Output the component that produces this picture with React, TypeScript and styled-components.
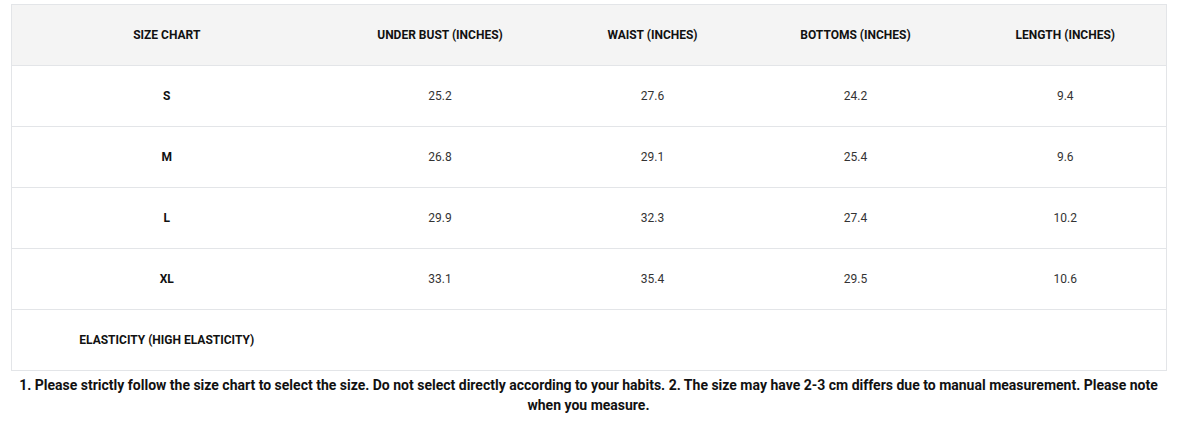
import React from "react";
import styled, { createGlobalStyle } from "styled-components";

const Global = createGlobalStyle`
  html, body { margin: 0; padding: 0; background: #fff; }
  body { font-family: Roboto, "Liberation Sans", Arial, sans-serif; }
`;

const Page = styled.div`
  padding: 4px 16px 0 11px;
`;

const Table = styled.table`
  width: 1155px;
  border-collapse: collapse;
  table-layout: fixed;
  border: 1px solid #e3e5e8;
`;

const HeadRow = styled.tr`
  background: #f4f4f4;
`;

const Th = styled.th`
  height: 60px;
  padding: 0;
  border-top: 1px solid #e3e5e8;
  border-bottom: 1px solid #e3e5e8;
  font-size: 12px;
  font-weight: 700;
  color: #111;
  text-align: center;
  vertical-align: middle;
`;

const Td = styled.td<{ $bold?: boolean }>`
  height: 60px;
  padding: 0;
  border-top: 1px solid #e3e5e8;
  border-bottom: 1px solid #e3e5e8;
  font-size: 12px;
  font-weight: ${(p) => (p.$bold ? 700 : 400)};
  color: ${(p) => (p.$bold ? "#111" : "#333")};
  text-align: center;
  vertical-align: middle;
`;

const Note = styled.p`
  margin: 4px 0 0;
  width: 1155px;
  font-size: 14px;
  font-weight: 700;
  line-height: 20px;
  color: #111;
  text-align: center;
`;

const widths = [310, 237, 188, 218, 202];
const headers = ["SIZE CHART", "UNDER BUST (INCHES)", "WAIST (INCHES)", "BOTTOMS (INCHES)", "LENGTH (INCHES)"];
const rows = [
  ["S", "25.2", "27.6", "24.2", "9.4"],
  ["M", "26.8", "29.1", "25.4", "9.6"],
  ["L", "29.9", "32.3", "27.4", "10.2"],
  ["XL", "33.1", "35.4", "29.5", "10.6"],
];

export default function App() {
  return (
    <Page>
      <Global />
      <Table>
        <colgroup>
          {widths.map((w, i) => (
            <col key={i} style={{ width: w }} />
          ))}
        </colgroup>
        <thead>
          <HeadRow>
            {headers.map((h) => (
              <Th key={h}>{h}</Th>
            ))}
          </HeadRow>
        </thead>
        <tbody>
          {rows.map((r) => (
            <tr key={r[0]}>
              {r.map((c, i) => (
                <Td key={i} $bold={i === 0}>
                  {c}
                </Td>
              ))}
            </tr>
          ))}
          <tr>
            <Td $bold>ELASTICITY (HIGH ELASTICITY)</Td>
            <Td />
            <Td />
            <Td />
            <Td />
          </tr>
        </tbody>
      </Table>
      <Note>
        1. Please strictly follow the size chart to select the size. Do not select directly according to your habits. 2. The size may have 2-3 cm differs due to manual measurement. Please note when you measure.
      </Note>
    </Page>
  );
}
